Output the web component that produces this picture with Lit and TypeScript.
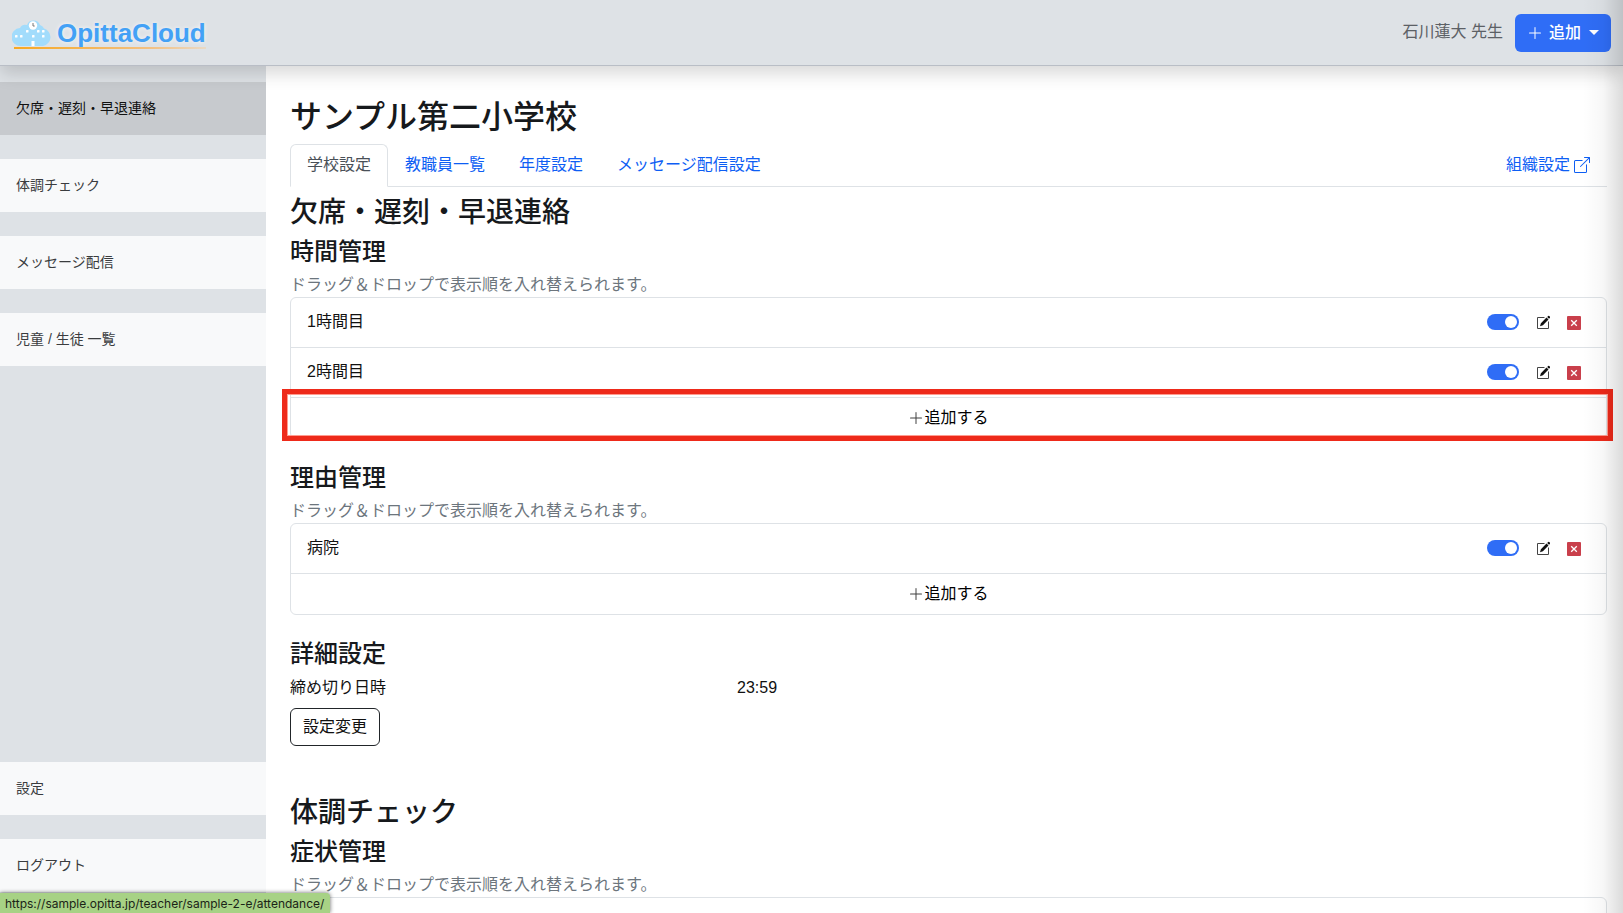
import { LitElement, html, css, svg } from "lit";
import { customElement, property } from "lit/decorators.js";

const HINT = "ドラッグ\uFF06ドロップで表示順を入れ替えられます。";

const plusIcon = html`<svg class="plus" viewBox="0 0 16 16" width="16" height="16" fill="currentColor" aria-hidden="true">
  <path d="M8 2a.5.5 0 0 1 .5.5v5h5a.5.5 0 0 1 0 1h-5v5a.5.5 0 0 1-1 0v-5h-5a.5.5 0 0 1 0-1h5v-5A.5.5 0 0 1 8 2"/>
</svg>`;

const windows: [number, number][] = [
  [4, 17], [9, 17], [15, 12], [21, 17], [26, 12], [31, 12], [31, 17],
];

@customElement("sort-list")
class SortList extends LitElement {
  @property({ attribute: false }) items: string[] = [];
  @property({ type: Boolean }) marked = false;

  static styles = css`
    :host { display: block; }
    * { box-sizing: border-box; }
    ul {
      margin: 0; padding: 0; list-style: none;
      border: 1px solid #dee2e6; border-radius: 6px;
    }
    .row {
      display: flex; align-items: center; height: 50px;
      padding: 0 24px 2px 16px; border-bottom: 1px solid #dee2e6;
    }
    .name { flex: 1; }
    .switch {
      appearance: none; margin: 0 17px 0 0; width: 32px; height: 16px;
      border-radius: 8px; background: #2f6df6; cursor: pointer;
      display: flex; align-items: center; justify-content: flex-end; padding: 2px;
    }
    .switch::before {
      content: ""; width: 12px; height: 12px; border-radius: 50%; background: #fff;
    }
    .switch:not(:checked) { justify-content: flex-start; background: #adb5bd; }
    .icon {
      border: 0; padding: 0; background: none; display: block; height: 16px; cursor: pointer;
      color: #111;
    }
    .icon svg { display: block; }
    .remove { margin-left: 16px; color: #c93f4b; }
    .foot { position: relative; }
    .add {
      display: flex; align-items: center; justify-content: center;
      width: 100%; height: 40px; border: 0; padding: 0; background: none;
      font: inherit; color: #000; cursor: pointer;
    }
    .add .plus { opacity: 0.75; }
    .marker {
      position: absolute; inset: -9px -7px -3px -9px;
      border: 5px solid #ee2a1a; pointer-events: none;
      box-shadow: inset 0 0 0 1px #ff9c90;
    }
  `;

  render() {
    return html`<ul>
      ${this.items.map((name) => html`<li class="row">
        <span class="name">${name}</span>
        <input class="switch" type="checkbox" role="switch" checked aria-label=${name} />
        <button class="icon" type="button" aria-label="編集">
          <svg viewBox="0 0 14 16" width="14" height="16">
            <path d="M8.500 3.500H1.500V14.500H12.500V7.500" fill="none" stroke="#444" stroke-width="1"/>
            <path d="M4 12.300l.9-3 5.600-5.700 2 2L6.900 11.300z M11.200 2.900l1-1q.5-.4 1 0l.8.8q.4.5 0 1l-1 1z" fill="currentColor"/>
          </svg>
        </button>
        <button class="icon remove" type="button" aria-label="削除">
          <svg viewBox="0 0 16 16" width="16" height="16">
            <rect x="1" y="2" width="14" height="14" rx="1" fill="currentColor"/>
            <path d="M5.200 6.200l5.600 5.600M10.800 6.200l-5.600 5.600" stroke="#fff" stroke-width="1.300"/>
          </svg>
        </button>
      </li>`)}
      <li class="foot">
        <button class="add" type="button">${plusIcon}追加する</button>
        ${this.marked ? html`<div class="marker"></div>` : null}
      </li>
    </ul>`;
  }
}

@customElement("app-root")
class AppRoot extends LitElement {
  static styles = css`
    :host {
      display: grid; grid-template: auto minmax(0, 1fr) / 266px minmax(0, 1fr);
      height: 100vh; overflow: hidden; position: relative;
      font: 16px/24px "Liberation Sans", "Noto Sans CJK JP", sans-serif;
      color: #16191c; background: #fff;
    }
    * { box-sizing: border-box; }
    a { text-decoration: none; color: #0d5ef4; }
    header {
      grid-column: 1 / -1; z-index: 2; display: flex; align-items: center;
      padding: 0 12px; height: 66px; background: #dee2e6;
      border-bottom: 1px solid #b9bec6; box-shadow: 0 8px 16px rgba(0, 0, 0, 0.15);
    }
    .brand { display: flex; align-items: center; gap: 6px; position: relative; }
    .brand svg { display: block; }
    .word {
      font-size: 26px; line-height: 30px; font-weight: 700; color: #43a1f6;
      text-shadow: 0 0 4px rgba(255, 255, 255, 0.8);
    }
    .rule {
      position: absolute; left: 2px; right: 0; bottom: 0; height: 2px;
      background: linear-gradient(90deg, #f7a823, #f3c080 70%, #ead9c4);
    }
    .user { margin-left: auto; margin-right: 12px; padding-bottom: 2px; color: #5c6065; }
    .create {
      display: flex; align-items: center; height: 38px; padding: 0 12px;
      border: 0; border-radius: 6px; background: #2f6df6; color: #fff;
      font: inherit; font-weight: 500; cursor: pointer;
    }
    .create .plus { margin-right: 6px; }
    .caret {
      margin-left: 8px; border: 5px solid transparent; border-top-color: #fff; border-bottom: 0;
    }
    nav.side {
      background: #dee2e6; padding: 16px 0 21px; display: flex; flex-direction: column; gap: 24px;
      font-size: 14px;
    }
    .side a {
      display: flex; align-items: center; flex: none; height: 53px; padding: 0 16px 2px;
      background: #f8f9fa; color: #3a3c3e;
    }
    .side .current { background: #c7cace; color: #111; }
    .side .push { margin-top: auto; }
    main { padding: 32px 16px 0 24px; overflow: hidden; }
    h1, h2, h3, p { margin: 0; }
    h1, h2, h3 { font-weight: 500; }
    h1 { font-size: 32px; line-height: 38px; margin-bottom: 8px; }
    h2 { font-size: 28px; line-height: 36px; margin-bottom: 6px; }
    h3 { font-size: 24px; line-height: 30px; margin-bottom: 6px; }
    .tabs { display: flex; border-bottom: 1px solid #dee2e6; margin-bottom: 8px; }
    .tabs a { padding: 8px 16px; border: 1px solid transparent; }
    .tabs .on {
      margin-bottom: -1px; color: #495057; background: #fff;
      border-color: #dee2e6 #dee2e6 #fff; border-radius: 6px 6px 0 0;
    }
    .tabs .org { margin-left: auto; display: flex; align-items: center; gap: 4px; }
    .hint { color: #6c757d; }
    sort-list { margin-bottom: 24px; color: #111; }
    .detail {
      display: grid; grid-template-columns: repeat(3, 1fr); gap: 24px;
      margin: 0; padding: 1px 0 8px; color: #111;
    }
    .detail dd { margin: 0; }
    .change {
      height: 38px; padding: 0 12px; border: 1px solid #212529; border-radius: 6px;
      background: #fff; color: #111; font: inherit; display: block; cursor: pointer;
    }
    .health { margin-top: 49px; }
    .panel { height: 92px; border: 1px solid #dee2e6; border-radius: 6px; }
    .status {
      position: absolute; z-index: 4; left: 0; bottom: 0; height: 20px; padding: 1px 6px 0 5px;
      background: #a7d285; color: #1b2417; border-top-right-radius: 4px;
      font: 12px/19px Inter, sans-serif; box-shadow: 0 0 4px rgba(0, 0, 0, 0.6);
    }
    .shade {
      position: absolute; z-index: 3; inset: 0 0 0 auto; width: 40px; pointer-events: none;
      background: linear-gradient(90deg, rgba(0,0,0,0), rgba(0,0,0,.03) 50%, rgba(0,0,0,.14));
    }
  `;

  render() {
    return html`
      <header>
        <a class="brand" href="#">
          <svg viewBox="0 0 39 32" width="39" height="32" aria-hidden="true">
            <path d="M9 29a9 9 0 0 1-1-18 6 6 0 0 1 7-3 7 7 0 0 1 13 0 7 7 0 0 1 4 3.500A9 9 0 0 1 31 29z" fill="#a2dcfc"/>
            <circle cx="21" cy="8.500" r="4.200" fill="#fff"/>
            <path d="M21 6V9h1.700" fill="none" stroke="#777" stroke-width="1"/>
            ${windows.map(([x, y]) => svg`<rect x=${x - 1} y=${y + 1} width="2.500" height="2.500" rx=".6" fill="#fff"/>`)}
            <rect x="19.500" y="24" width="3" height="5" fill="#fff"/>
          </svg>
          <span class="word">OpittaCloud</span>
          <span class="rule"></span>
        </a>
        <span class="user">石川蓮大 先生</span>
        <button class="create" type="button">${plusIcon}追加<span class="caret"></span></button>
      </header>
      <nav class="side">
        <a class="current" href="#">欠席・遅刻・早退連絡</a>
        <a href="#">体調チェック</a>
        <a href="#">メッセージ配信</a>
        <a href="#">児童 / 生徒 一覧</a>
        <a class="push" href="#">設定</a>
        <a href="#">ログアウト</a>
      </nav>
      <main>
        <h1>サンプル第二小学校</h1>
        <nav class="tabs">
          <a class="on" href="#">学校設定</a>
          <a href="#">教職員一覧</a>
          <a href="#">年度設定</a>
          <a href="#">メッセージ配信設定</a>
          <a class="org" href="#">組織設定<svg viewBox="0 0 16 16" width="16" height="16" fill="currentColor" aria-hidden="true">
            <path d="M8.636 3.500a.5.5 0 0 0-.5-.5H1.500A1.500 1.500 0 0 0 0 4.500v10A1.500 1.500 0 0 0 1.500 16h10a1.500 1.500 0 0 0 1.500-1.500V7.864a.5.5 0 0 0-1 0V14.500a.5.5 0 0 1-.5.5h-10a.5.5 0 0 1-.5-.5v-10a.5.5 0 0 1 .5-.5h6.636a.5.5 0 0 0 .5-.5"/>
            <path d="M16 .5a.5.5 0 0 0-.5-.5h-5a.5.5 0 0 0 0 1h3.793L6.146 9.146a.5.5 0 1 0 .708.708L15 1.707V5.500a.5.5 0 0 0 1 0z"/>
          </svg></a>
        </nav>
        <section>
          <h2>欠席・遅刻・早退連絡</h2>
          <h3>時間管理</h3>
          <p class="hint">${HINT}</p>
          <sort-list .items=${["1時間目", "2時間目"]} marked></sort-list>
          <h3>理由管理</h3>
          <p class="hint">${HINT}</p>
          <sort-list .items=${["病院"]}></sort-list>
          <h3>詳細設定</h3>
          <dl class="detail"><dt>締め切り日時</dt><dd>23:59</dd></dl>
          <button class="change" type="button">設定変更</button>
        </section>
        <section class="health">
          <h2>体調チェック</h2>
          <h3>症状管理</h3>
          <p class="hint">${HINT}</p>
          <div class="panel"></div>
        </section>
      </main>
      <div class="shade"></div>
      <div class="status">https://sample.opitta.jp/teacher/sample-2-e/attendance/</div>
    `;
  }
}
